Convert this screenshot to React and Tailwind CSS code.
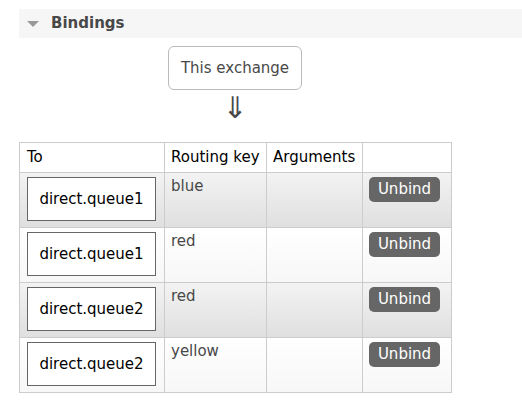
import React from 'react';

const bindings = [
  { queue: 'direct.queue1', key: 'blue' },
  { queue: 'direct.queue1', key: 'red' },
  { queue: 'direct.queue2', key: 'red' },
  { queue: 'direct.queue2', key: 'yellow' },
];

export default function App() {
  return (
    <div className="w-[522px] h-[409px] bg-white pt-[9px] text-[15px] text-[#484848]" style={{ fontFamily: '"DejaVu Sans", Verdana, sans-serif' }}>
      <div className="ml-[19px] h-[29px] bg-[#f6f6f6] flex items-center">
        <span className="ml-[8px] w-0 h-0 border-l-[6px] border-r-[6px] border-t-[6px] border-l-transparent border-r-transparent border-t-[#999]" />
        <span className="ml-[12px] font-bold text-[15px] text-[#484848]">Bindings</span>
      </div>

      <div className="flex flex-col items-center w-[470px]">
        <div className="mt-[8px] w-[134px] h-[44px] border border-[#bbb] rounded-[6px] flex items-center justify-center text-[#484848]">
          This exchange
        </div>
        <div className="mt-[2px] h-[32px] text-[30px] leading-[32px] text-[#484848]">⇓</div>
      </div>

      <table className="ml-[19px] mt-[18px] border-collapse border border-[#ccc]">
        <thead>
          <tr className="h-[30px] bg-white text-black">
            <th className="w-[145px] p-0 border border-[#ccc] text-left font-normal pl-[7px]">To</th>
            <th className="w-[102px] p-0 border border-[#ccc] text-left font-normal pl-[6px]">Routing key</th>
            <th className="w-[96px] p-0 border border-[#ccc] text-left font-normal pl-[6px]">Arguments</th>
            <th className="w-[89px] p-0 border border-[#ccc]" />
          </tr>
        </thead>
        <tbody>
          {bindings.map((b, i) => (
            <tr
              key={i}
              className={
                i % 2 === 0
                  ? 'h-[55px] bg-gradient-to-b from-[#f3f3f3] to-[#dfdfdf]'
                  : 'h-[55px] bg-gradient-to-b from-white to-[#f7f7f7]'
              }
            >
              <td className="border border-[#ccc] align-top pt-[4px] pl-[7px] pb-0 pr-0">
                <div className="w-[129px] h-[44px] border border-[#666] bg-white flex items-center justify-center text-black">
                  {b.queue}
                </div>
              </td>
              <td className="border border-[#ccc] align-top pt-[2px] px-[6px] text-[#484848]">{b.key}</td>
              <td className="border border-[#ccc]" />
              <td className="border border-[#ccc] align-top pt-[4px] pl-[6px]">
                <button className="w-[71px] h-[25px] rounded-[5px] bg-[#666] text-white text-[15px] flex items-center justify-center">
                  Unbind
                </button>
              </td>
            </tr>
          ))}
        </tbody>
      </table>
    </div>
  );
}
